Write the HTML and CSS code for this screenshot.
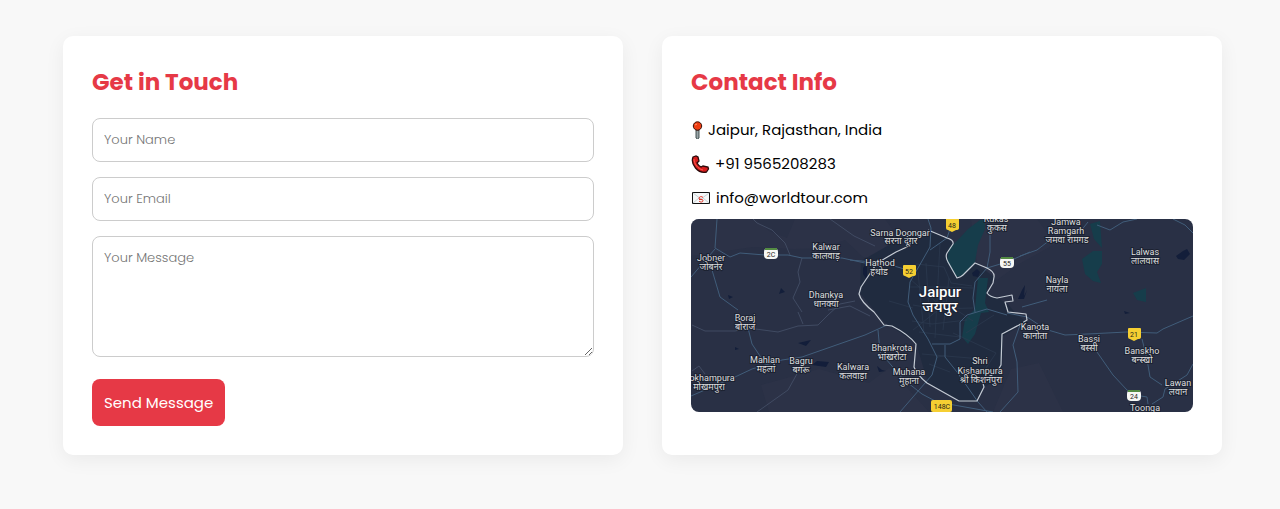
FILE: index.html
```html
<!DOCTYPE html>
<html lang="en">
<head>
<meta charset="utf-8">
<meta name="viewport" content="width=device-width, initial-scale=1">
<title>Contact</title>
<link rel="stylesheet" href="styles.css">
</head>
<body>
<main class="contact">
  <section class="card">
    <h2 class="card-title">Get in Touch</h2>
    <form class="form">
      <input class="field" type="text" placeholder="Your Name" aria-label="Your Name">
      <input class="field" type="email" placeholder="Your Email" aria-label="Your Email">
      <textarea class="field message" placeholder="Your Message" aria-label="Your Message"></textarea>
      <button class="send" type="submit">Send Message</button>
    </form>
  </section>
  <section class="card">
    <h2 class="card-title">Contact Info</h2>
    <ul class="info">
      <li class="info-row">
        <svg class="pin" viewBox="0 0 12 18" aria-hidden="true"><path d="M5 9h3v8l-1.500 1L5 17z" fill="#9aa5a8" stroke="#344" stroke-width=".9"/><circle cx="6.500" cy="5" r="4.200" fill="#ee3d12" stroke="#351008"/><path d="M4 4l2-1" stroke="#ff9a70"/></svg>
        <span>Jaipur, Rajasthan, India</span>
      </li>
      <li class="info-row">
        <svg class="phone" viewBox="0 0 19 18" aria-hidden="true"><path d="M2 2l3-1 2 1 1 4-2 2c1 2 2 3 4 4l2-1 5 1 .5 2-2 3c-4 1-8-.5-11-4S.5 6 2 2z" fill="#d51c1c" stroke="#2b0909" stroke-width="1.300"/><path d="M3 4c0 5 4 10 9 11" fill="none" stroke="#ff5b4e"/></svg>
        <span>+91 9565208283</span>
      </li>
      <li class="info-row">
        <svg class="mail" viewBox="0 0 20 18" aria-hidden="true"><path d="M1.500 3.500h17v11h-17z" fill="#f5f8f9" stroke="#111"/><path d="M2 14l6-5M18 14l-6-5M2 4l8 6 8-6" fill="none" stroke="#b9c4c8" stroke-width=".8"/><path d="M12 8.500c-1-1.500-4-1-4 .7S12 10 12 11.700 9 13.500 8 12M8 10.500h3.500" fill="none" stroke="#df3528"/></svg>
        <span>info@worldtour.com</span>
      </li>
    </ul>
    <svg class="map" viewBox="0 0 502 193" preserveAspectRatio="xMidYMid slice" role="img" aria-label="Map of Jaipur">
      <rect class="land" width="502" height="193"/>
      <path class="suburb" d="M0 0h64l14 12 18 7 8-19h90l20 28-20 12-22-2-18-17-22 8-28 1-42-2L0 37zM280 0h66l18 25-36 20-22 16-20-18zM70 166l22-6 36-10 50 14 20-15 40 44H78zM320 150l28-6 24 49h-70z"/>
      <path class="city" d="M170 42l42-24 28-5 22 10-6 20 10 16 18-15 19 14-7 16 20 10 10 12 10 7-24 14-1 40-19 12-5 13-18 0-32-18-12-40-32-21-24-29z"/>
      <path class="park" d="M256 43l2-14 8-7 11-12 12-9h5v9l-7 16-3 17-12 13-6 2zM287 59h10l-3 25 4 9-8 1-6 21-7 10-6-7 3-18 10-10zM399 5l10-3 2 27-8-9zM391 40l11-8h9l0 13-5 8 4 11-8-2-8-7zM442 74l13-5v14l-9-2z"/>
      <path class="water" d="M485 37l7-5 4-2 3 5-6 6-6-1zM281 54l5-4 3 3-2 5-5-1zM327 80l4-9 3-5-1 11 3-6-3 9zM186 147l5 4 4 1-7 1zM172 49l4-5v17l-4-6zM107 124l13-3-5 6zM126 142l12 1-3 5-14-2zM90 69l4 4-6 2zM37 76l5 2-4 2zM433 92l6 2-5 1zM44 128l4 2-4 1zM405 20l1 7M416 25l-9 48"/>
      <g class="street">
        <path d="M225 45l28 3 7 16 21 3M218 68h31l33 1M227 53l6 61M235 44l4 64M249 24l-5 95M258 59l-6 52M222 86l23 4 37-1M221 102l20 3 35-4M228 113l41 5M240 74l42 28M219 60l32 28-29 23M246 138l8-1M231 135l60 5M198 82l24 7M262 114l43 20-12 18M238 145l21 8M303 96l-28 18"/>
      </g>
      <g class="lane">
        <path d="M62 0l4 4 15 7 13 13 5 12M111 39l-4 14 2 10-7 16 9 14M1 106l13 6h30l13-3 30 4 20-6 20-1 10-10 12-11 15-3M107 93l5 12M107 153l-10 18-31 22M139 0l24 17 21 10M137 91l22-4 20 10M1 152l7-5 6 8"/>
      </g>
      <g class="road">
        <path d="M26 0l-2 29 15 9 10-4 25 2h23l14 3h40l23 5M24 30L0 58M21 51l8 27 18 13M57 109l4 16 10 15M0 177l44-19 17-8 30-9 20-3 63-22 22-10M159 41l34 3 27 8M357 111l17 5 22-1 40-2 30 1 6-4 30-13M406 133l16 23 14 15 8 5 12 2 1 7M451 120l5 20 3 18 12 8M502 145l-6 11-22 14-2 8-11 7"/>
        <path d="M237 0l3 9-1 19-20 35-2 20 5 13 15 24 9 18-5 18-32 37M261 4l-5 15-17 12M299 12v21l-3 16-12 14-2 16 2 14M296 49l20-6 23-10M241 125h18l10-5v-17l7-7M254 126v12l12 15 21 30 9 10M187 111l2 22 23 27 19 15 15 8 56 10M329 106l-7 20 4 17 1 30-18 20M316 94l20 4 20 13M329 37l17-6 13-10 30-8 8-10M406 6l13 5 13-8 14-3M482 0l12 6 8 8M331 88l25-7M276 96l20-6 20 6"/>
      </g>
      <path class="border" d="M237 11l19 8q7 2 6 6l-6 9q-2 4 1 9l9 16q4-1 6-3l12-12 12 5q8 4 7 9l-1 6-6 10q3 4 10 5l15-3 1 6-8 1 3 10 18 2 1 6-8 5-17 9-1 31q-4 8-9 10l-10 5 2 7-7 14h-18l-32-18q-10-8-13-16l2-23q-8-10-24-18l-8-1-10-13q-13-10-15-18l2-7 10-15q5-9 13-13l12-7 13-6 2-5"/>
      <g class="place">
        <text x="20" y="42">Jobner</text><text x="20" y="51" class="hi">जोबनेर</text>
        <text x="135" y="31">Kalwar</text><text x="135" y="40" class="hi">कालवाड़</text>
        <text x="135" y="79">Dhankya</text><text x="135" y="88" class="hi">धानक्या</text>
        <text x="209" y="17">Sarna Doongar</text><text x="210" y="25" class="hi">सरना दूंगर</text>
        <text x="189" y="47">Hathod</text><text x="188" y="56" class="hi">हथोड</text>
        <text x="305" y="3">Kukas</text><text x="306" y="12" class="hi">कुकस</text>
        <text x="375" y="6">Jamwa</text><text x="375" y="15">Ramgarh</text><text x="376" y="24" class="hi">जमवा रामगड</text>
        <text x="454" y="36">Lalwas</text><text x="454" y="45" class="hi">लालवास</text>
        <text x="366" y="64">Nayla</text><text x="366" y="73" class="hi">नायला</text>
        <text x="54" y="102">Boraj</text><text x="54" y="111" class="hi">बोराज</text>
        <text x="74" y="144">Mahlan</text><text x="75" y="153" class="hi">महलां</text>
        <text x="110" y="145">Bagru</text><text x="110" y="154" class="hi">बगरू</text>
        <text x="21" y="162">okhampura</text><text x="18" y="171" class="hi">मोखमपुरा</text>
        <text x="162" y="151">Kalwara</text><text x="162" y="160" class="hi">कलवाड़ा</text>
        <text x="201" y="132">Bhankrota</text><text x="201" y="141" class="hi">भांखरोटा</text>
        <text x="218" y="156">Muhana</text><text x="218" y="165" class="hi">मुहाना</text>
        <text x="289" y="145">Shri</text><text x="289" y="155">Kishanpura</text><text x="290" y="164" class="hi">श्री किशनपुरा</text>
        <text x="344" y="111">Kanota</text><text x="344" y="120" class="hi">कानोता</text>
        <text x="398" y="123">Bassi</text><text x="398" y="132" class="hi">बस्सी</text>
        <text x="451" y="135">Banskho</text><text x="451" y="144" class="hi">बन्स्खो</text>
        <text x="487" y="167">Lawan</text><text x="487" y="176" class="hi">लवान</text>
        <text x="454" y="192">Toonga</text>
        <text x="249" y="78" class="big">Jaipur</text><text x="249" y="93" class="big">जयपुर</text>
      </g>
      <g class="shield">
        <path d="M255 0h13v9q0 2-3 2l-4 2-4-2q-2 0-2-2zM213 46h11q1 0 1 1v8q0 2-3 2l-4 2-4-2q-2 0-2-2v-8q0-1 1-1zM438 109h11q1 0 1 1v8q0 2-3 2l-4 2-4-2q-2 0-2-2v-8q0-1 1-1z"/>
        <rect x="240" y="181" width="21" height="12" rx="2"/>
        <text x="261" y="9">48</text><text x="218" y="55">52</text><text x="443" y="118">21</text><text x="251" y="190">148C</text>
      </g>
      <g class="shield white">
        <rect x="73" y="29" width="14" height="11" rx="4"/><rect x="309" y="38" width="14" height="11" rx="4"/><rect x="436" y="171" width="14" height="11" rx="4"/>
        <path class="green" d="M74 29h12v2H74zM310 38h12v2h-12zM437 171h12v2h-12z"/>
        <text x="80" y="38">2C</text><text x="316" y="47">55</text><text x="443" y="180">24</text>
      </g>
    </svg>
  </section>
</main>
</body>
</html>
```
FILE: styles.css
```css
* { box-sizing: border-box; }
body {
  margin: 0;
  min-height: 100vh;
  background: #f8f8f8;
  color: #000;
  font-family: Poppins, Inter, "Noto Sans", sans-serif;
  font-size: 16px;
}
.contact {
  display: grid;
  grid-template-columns: 1fr 1fr;
  gap: 39px;
  padding: 36px 58px 54px 63px;
}
.card {
  padding: 29px;
  background: #fff;
  border-radius: 10px;
  box-shadow: 0 5px 20px rgba(0, 0, 0, .06);
}
.card-title {
  margin: 0 0 19px;
  color: #e63946;
  font-size: 23px;
  line-height: 34px;
  font-weight: 700;
}
.form {
  display: flex;
  flex-direction: column;
  align-items: flex-start;
  gap: 15px;
}
.field {
  width: 100%;
  height: 44px;
  padding: 11px;
  border: 1px solid #ccc;
  border-radius: 8px;
  background: #fff;
  font: 13px/20px Poppins, Inter, "Noto Sans", sans-serif;
}
.field::placeholder { color: #757575; font-weight: 300; }
.message { display: block; height: 121px; resize: vertical; }
.send {
  margin-top: 7px;
  padding: 12px;
  border: 0;
  border-radius: 8px;
  background: #e63946;
  color: #fff;
  font: 15px/23px Poppins, Inter, "Noto Sans", sans-serif;
}
.info {
  display: flex;
  flex-direction: column;
  gap: 10px;
  margin: 0 0 9px;
  padding: 0;
  list-style: none;
}
.info-row {
  display: flex;
  align-items: center;
  gap: 5px;
  font-size: 15px;
  line-height: 24px;
}
.pin { width: 12px; height: 18px; }
.phone { width: 19px; height: 18px; }
.mail { width: 20px; height: 18px; }
.map {
  display: block;
  width: 100%;
  border-radius: 8px;
}
.land { fill: #293045; }
.suburb { fill: #2f3349; opacity: .6; }
.city { fill: #202b3f; }
.park { fill: #163d4b; }
.water { fill: #131e3a; }
.street, .lane, .road, .border { fill: none; stroke-linejoin: round; }
.street { stroke: #2c3b50; stroke-width: .7; }
.lane { stroke: #465269; stroke-width: .8; }
.road { stroke: #415d7a; }
.border { stroke: #c4cbd4; stroke-width: 1.2; }
.place {
  fill: #dcdedf;
  stroke: #1c2231;
  stroke-width: 2;
  paint-order: stroke;
  font: 9px Roboto, "Noto Sans Devanagari", "Noto Sans", sans-serif;
  text-anchor: middle;
}
.hi { font-size: 9px; }
.big { font-size: 15px; font-weight: 500; fill: #fff; }
.shield {
  fill: #f6cf32;
  font: 7px Roboto, sans-serif;
  text-anchor: middle;
}
.shield text { fill: #292718; }
.white { fill: #f7f8f5; }
.green { fill: #548c43; }
```
